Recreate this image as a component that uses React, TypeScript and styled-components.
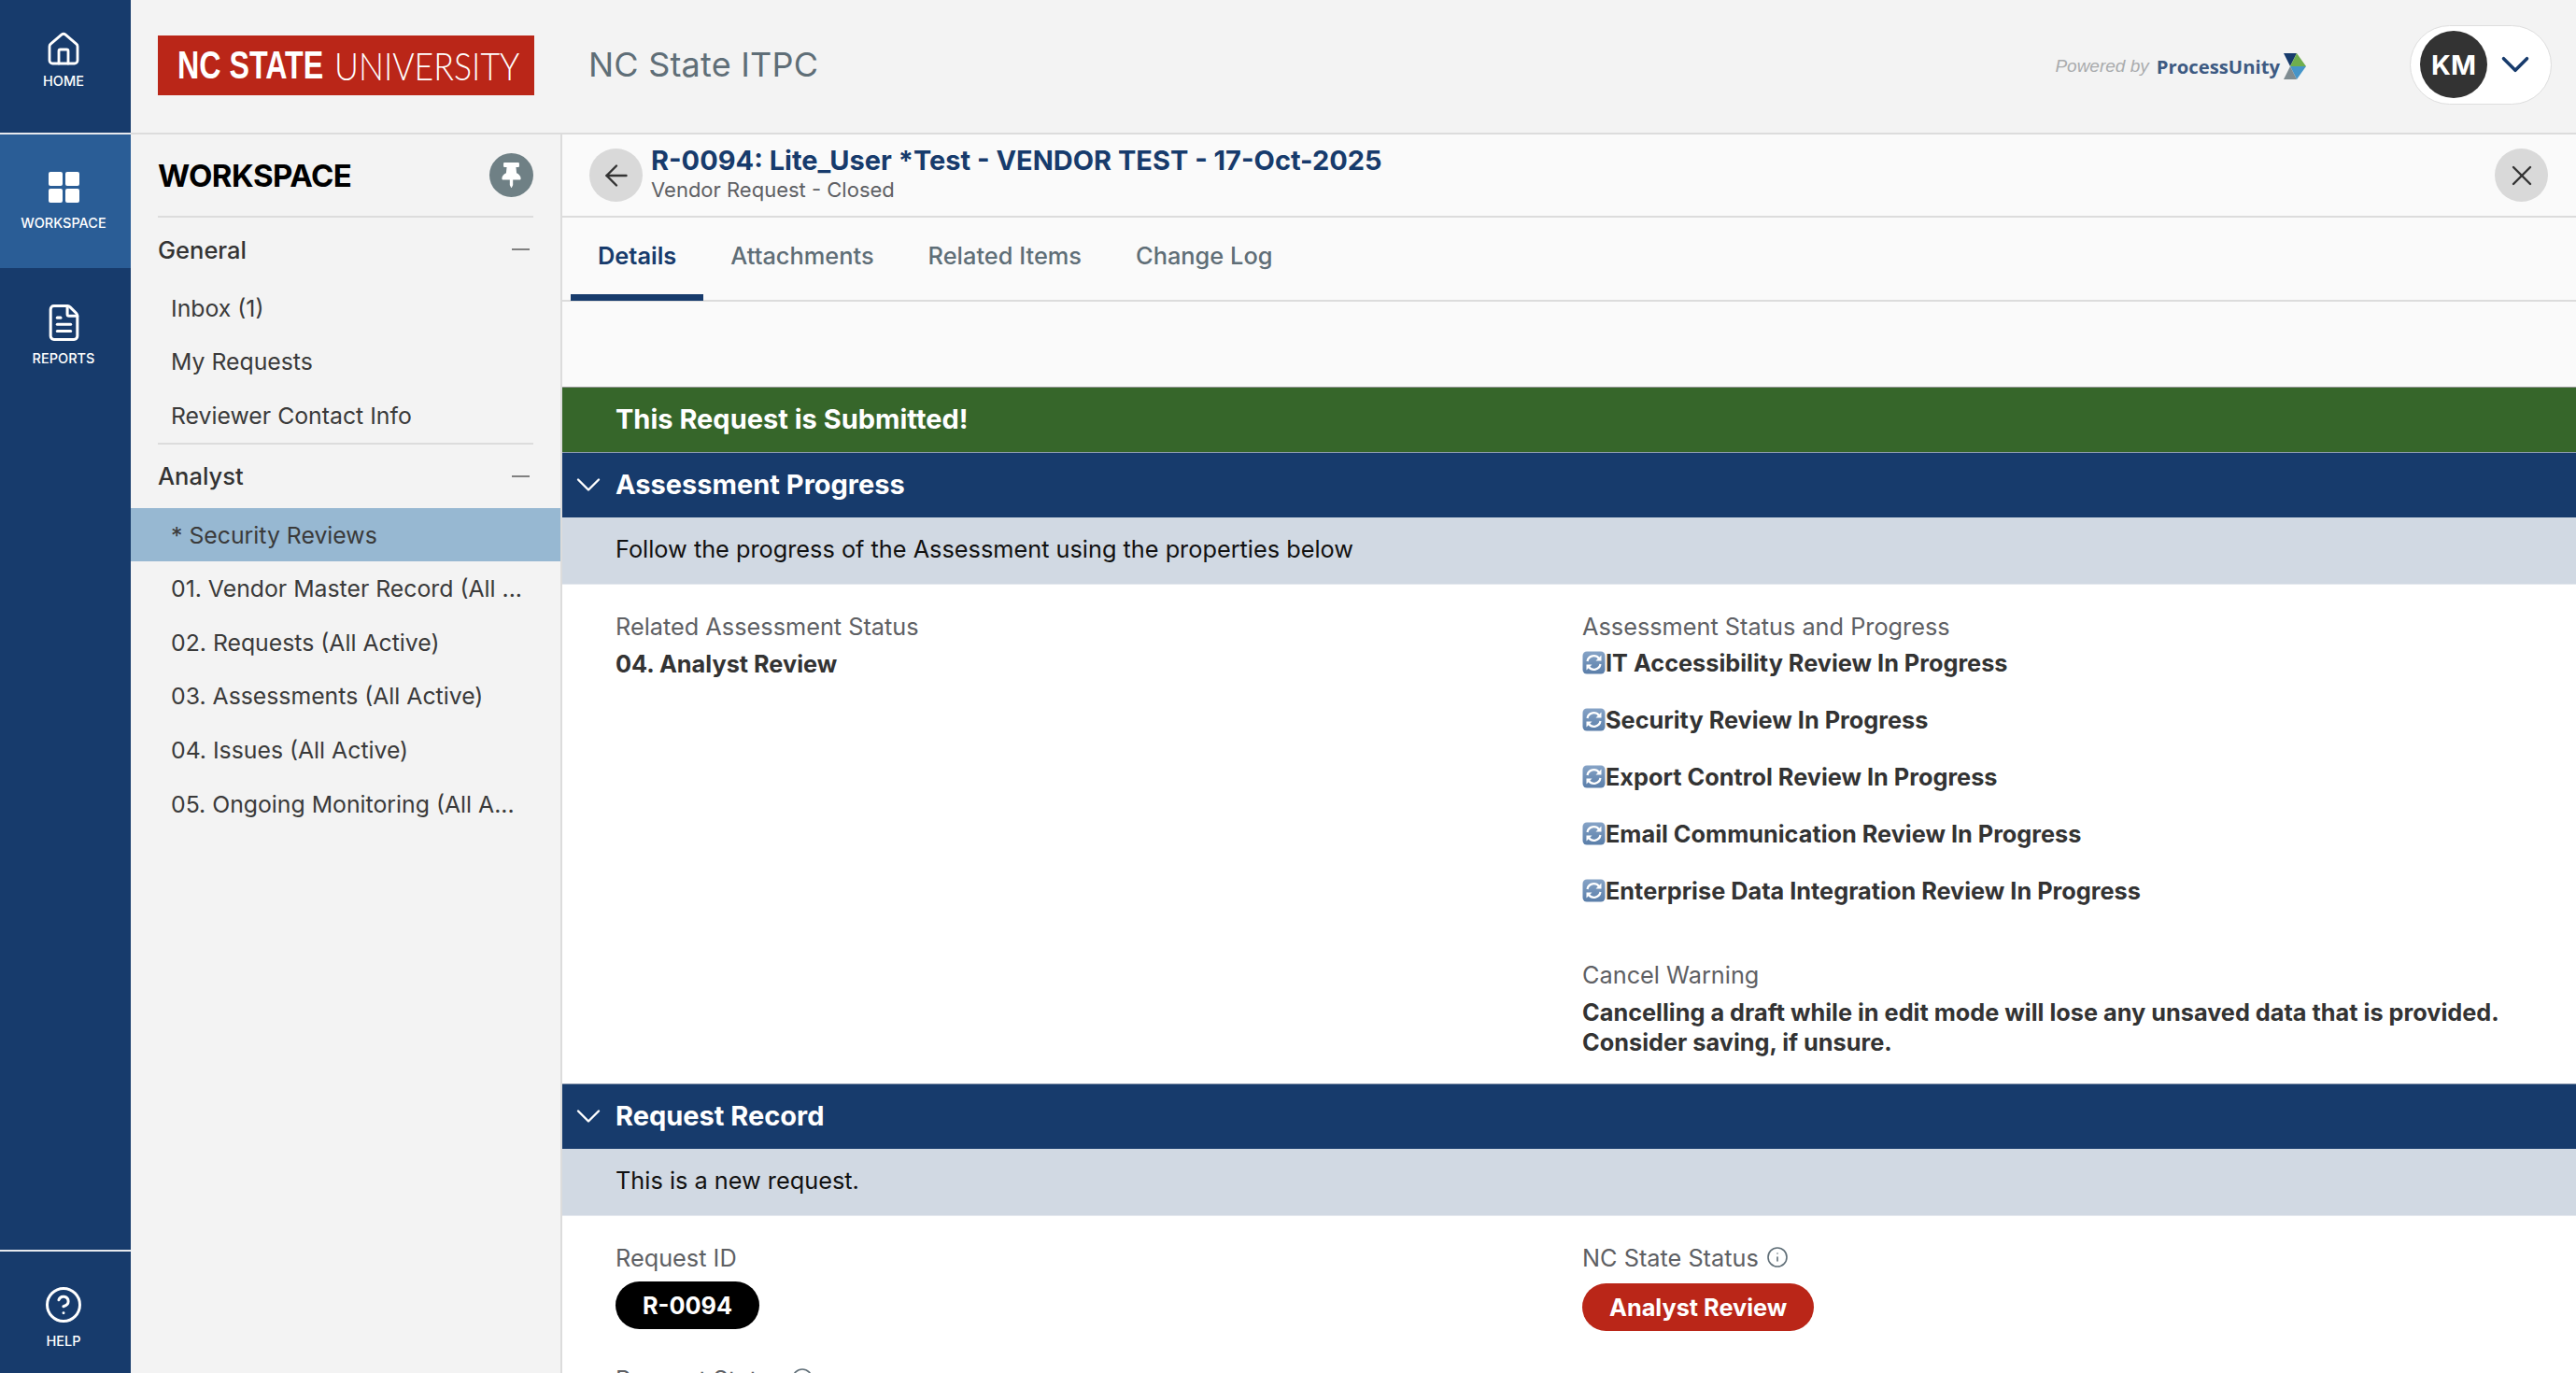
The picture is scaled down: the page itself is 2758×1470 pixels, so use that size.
import React from 'react';
import styled, { createGlobalStyle } from 'styled-components';
import { ArrowLeft, ChevronDown, CircleHelp, FileText, House, Info, X } from 'lucide-react';
import { FaThumbtack } from 'react-icons/fa';

const NAVY = '#173b6c';

const GlobalStyle = createGlobalStyle`
  html, body { margin: 0; padding: 0; height: 100%; }
  body { font-family: Inter, "Noto Sans", "Liberation Sans", sans-serif; background: #fff; color: #333; overflow: hidden; }
  * { box-sizing: border-box; }
`;

const Shell = styled.div`
  display: flex;
  width: 2758px;
  height: 1470px;
  overflow: hidden;
`;

const Rail = styled.nav`
  width: 140px;
  flex: none;
  display: flex;
  flex-direction: column;
  background: ${NAVY};
`;

const RailItem = styled.a<{ $active?: boolean; $height: number; $iconTop: number }>`
  display: flex;
  flex-direction: column;
  align-items: center;
  height: ${(p) => p.$height}px;
  padding: ${(p) => p.$iconTop}px 4px 0 0;
  background: ${(p) => (p.$active ? '#2a5d96' : 'transparent')};
  color: #fff;
  font-size: 14.5px;
  font-weight: 500;
  line-height: 18px;
  svg { display: block; }
`;

const RailIconBox = styled.span<{ $gap?: number }>`
  height: 36px;
  display: flex;
  align-items: center;
  justify-content: center;
  margin-bottom: ${(p) => p.$gap ?? 12}px;
`;

const RailDivider = styled.div`
  height: 2px;
  background: #e6e9ee;
`;

const RailHelp = styled.div`
  margin-top: auto;
`;

const Column = styled.div`
  flex: 1;
  min-width: 0;
  display: flex;
  flex-direction: column;
`;

const TopBar = styled.header`
  height: 144px;
  flex: none;
  display: flex;
  align-items: center;
  padding: 0 26px 4px 29px;
  background: #f3f3f3;
  border-bottom: 2px solid #dcdcdc;
`;

const Logo = styled.div`
  width: 403px;
  height: 64px;
  flex: none;
  display: flex;
  align-items: center;
  gap: 10px;
  padding-left: 21px;
  background: #ba2618;
  color: #fff;
  font-size: 42px;
  white-space: nowrap;
  margin-top: 2px;
`;

const LogoBold = styled.b`
  width: 158px;
  font-family: "Liberation Sans", sans-serif;
  font-weight: 700;
  transform: scaleX(0.767);
  transform-origin: left center;
`;

const LogoLight = styled.span`
  width: 195px;
  font-family: Lato, "Liberation Sans", sans-serif;
  font-weight: 300;
  transform: scaleX(0.85);
  transform-origin: left center;
`;

const AppName = styled.div`
  margin-left: 58px;
  font-size: 36px;
  color: #5f6e77;
  letter-spacing: 0.2px;
`;

const Powered = styled.div`
  margin-left: auto;
  display: flex;
  align-items: center;
  margin-right: 111px;
  margin-top: 4px;
`;

const PoweredBy = styled.span`
  font-family: "Liberation Sans", sans-serif;
  font-style: italic;
  font-size: 19px;
  color: #a9abad;
  margin-right: 8px;
`;

const PoweredName = styled.span`
  font-family: "Open Sans", sans-serif;
  font-size: 20.3px;
  font-weight: 700;
  color: #3d5a82;
  margin-right: 4px;
`;

const UserPill = styled.div`
  width: 152px;
  height: 85px;
  display: flex;
  align-items: center;
  padding-left: 10px;
  border-radius: 43px;
  border: 1px solid #dedede;
  background: #fff;
  color: ${NAVY};
`;

const Avatar = styled.div`
  width: 72px;
  height: 72px;
  flex: none;
  border-radius: 50%;
  background: #333;
  color: #fff;
  font-size: 29px;
  font-weight: 700;
  display: flex;
  align-items: center;
  justify-content: center;
  margin-right: 5px;
`;

const Body = styled.div`
  flex: 1;
  min-height: 0;
  display: flex;
`;

const Sidebar = styled.aside`
  width: 462px;
  flex: none;
  background: #f3f3f3;
  border-right: 2px solid #dcdcdc;
`;

const SidebarHead = styled.div`
  height: 89px;
  margin: 0 29px;
  display: flex;
  align-items: center;
  justify-content: space-between;
  border-bottom: 2px solid #dcdcdc;
  font-size: 33px;
  font-weight: 700;
  color: #000;
  letter-spacing: -0.5px;
`;

const PinButton = styled.span`
  width: 47px;
  height: 47px;
  border-radius: 50%;
  background: #6f8085;
  color: #fff;
  display: flex;
  align-items: center;
  justify-content: center;
`;

const GroupHead = styled.div<{ $height: number }>`
  height: ${(p) => p.$height}px;
  margin: 0 29px;
  display: flex;
  align-items: center;
  justify-content: space-between;
  font-size: 25.5px;
  font-weight: 500;
  color: #333;
`;

const Minus = styled.span`
  width: 19px;
  height: 2px;
  background: #808080;
  margin-right: 4px;
`;

const SideRow = styled.div<{ $active?: boolean }>`
  height: 57.6px;
  display: flex;
  align-items: center;
  padding-left: 43px;
  font-size: 24.8px;
  color: #3a3a3a;
  white-space: nowrap;
  background: ${(p) => (p.$active ? '#97b8d2' : 'transparent')};
`;

const SideDivider = styled.div`
  height: 2px;
  margin: 0 29px;
  background: #dcdcdc;
`;

const Main = styled.main`
  flex: 1;
  min-width: 0;
  overflow: hidden;
  background: #fff;
`;

const TitleBar = styled.div`
  height: 89px;
  display: flex;
  align-items: center;
  padding: 0 30px 0 29px;
  background: #fafafa;
  border-bottom: 2px solid #dcdcdc;
`;

const RoundButton = styled.span`
  width: 57px;
  height: 57px;
  flex: none;
  border-radius: 50%;
  background: #d9d9d9;
  color: #333;
  display: flex;
  align-items: center;
  justify-content: center;
`;

const TitleText = styled.div`
  flex: 1;
  margin-left: 9px;
  padding-bottom: 6px;
`;

const Title = styled.div`
  font-size: 29px;
  line-height: 36px;
  font-weight: 700;
  color: ${NAVY};
`;

const Subtitle = styled.div`
  font-size: 22px;
  line-height: 26px;
  color: #5e6064;
`;

const Tabs = styled.div`
  height: 90px;
  display: flex;
  padding-left: 9px;
  background: #fafafa;
  border-bottom: 2px solid #dcdcdc;
`;

const Tab = styled.div<{ $active?: boolean }>`
  height: 89px;
  padding: 0 29px 2px;
  display: flex;
  align-items: center;
  font-size: 25.4px;
  font-weight: ${(p) => (p.$active ? 600 : 500)};
  color: ${(p) => (p.$active ? NAVY : '#5f6e77')};
  border-bottom: 7px solid ${(p) => (p.$active ? NAVY : 'transparent')};
`;

const Spacer = styled.div`
  height: 91px;
  background: #fafafa;
`;

const Banner = styled.div`
  height: 70px;
  display: flex;
  align-items: center;
  padding: 0 0 2px 57px;
  background: #36662a;
  border-top: 1px solid #9a9a9a;
  color: #fff;
  font-size: 29px;
  font-weight: 700;
`;

const SectionHead = styled.div`
  height: 70px;
  display: flex;
  align-items: center;
  padding: 0 0 2px 6px;
  background: ${NAVY};
  border-top: 1px solid #8d9bb0;
  color: #fff;
  font-size: 29px;
  font-weight: 700;
  svg { margin-right: 7px; }
`;

const SectionNote = styled.div`
  height: 72px;
  display: flex;
  align-items: center;
  padding: 0 0 5px 57px;
  background: #d1d9e3;
  border-bottom: 1px solid #e4e8ee;
  font-size: 25.3px;
  color: #111;
`;

const FieldGrid = styled.div<{ $height: number }>`
  display: grid;
  grid-template-columns: 1035px 1fr;
  align-items: start;
  min-height: ${(p) => p.$height}px;
  padding: 26px 20px 0 57px;
`;

const Field = styled.div`
  display: flex;
  flex-direction: column;
`;

const Label = styled.div`
  display: flex;
  align-items: center;
  gap: 8px;
  height: 36px;
  font-size: 25.3px;
  color: #5e6064;
  svg { color: #5f6e77; }
`;

const Value = styled.div`
  margin-top: 7px;
  font-size: 25.3px;
  line-height: 31.5px;
  font-weight: 700;
  color: #333;
`;

const ProgressList = styled.div`
  display: flex;
  flex-direction: column;
  gap: 30px;
  margin-top: 6px;
  margin-bottom: 56px;
`;

const ProgressRow = styled.div`
  display: flex;
  align-items: center;
  height: 31px;
  font-size: 25.3px;
  font-weight: 700;
  color: #333;
`;

const Pill = styled.span<{ $bg: string; $top: number }>`
  align-self: flex-start;
  height: 51px;
  display: inline-flex;
  align-items: center;
  padding: 0 29px;
  margin-top: ${(p) => p.$top}px;
  border-radius: 26px;
  background: ${(p) => p.$bg};
  color: #fff;
  font-size: 25.3px;
  font-weight: 700;
`;

const SyncIcon = () => (
  <svg width="25" height="25" viewBox="0 0 25 25" style={{ flex: 'none' }}>
    <defs>
      <linearGradient id="sync" x1="0" y1="0" x2="0" y2="1">
        <stop offset="0" stopColor="#86a3c6" />
        <stop offset="1" stopColor="#5a7ea9" />
      </linearGradient>
    </defs>
    <rect x="0.5" y="0.5" width="24" height="24" rx="4.5" fill="url(#sync)" />
    <path d="M5.5 11a7 7 0 0 1 12.5-3" fill="none" stroke="#fff" strokeWidth="2.2" />
    <path d="M19.5 14a7 7 0 0 1-12.5 3" fill="none" stroke="#fff" strokeWidth="2.2" />
    <path d="M20.5 4.5v6h-6z" fill="#fff" />
    <path d="M4.5 20.5v-6h6z" fill="#fff" />
  </svg>
);

const WorkspaceIcon = () => (
  <svg width="33" height="33" viewBox="0 0 33 33" fill="#fff">
    <rect width="15" height="15" rx="2" />
    <rect x="18" width="15" height="15" rx="2" />
    <rect y="18" width="15" height="15" rx="2" />
    <rect x="18" y="18" width="15" height="15" rx="2" />
  </svg>
);

const ProcessUnityMark = () => (
  <svg width="24" height="28" viewBox="0 0 24 28">
    <path d="M0 0h14l-7 14z" fill="#173b6c" />
    <path d="M14 0l10 14H7z" fill="#6fae4e" />
    <path d="M7 14h17L14 28z" fill="#4595c9" />
    <path d="M7 14l7 14H0z" fill="#7f8c91" />
  </svg>
);

const generalItems = ['Inbox (1)', 'My Requests', 'Reviewer Contact Info'];

const analystItems = [
  '* Security Reviews',
  '01. Vendor Master Record (All ...',
  '02. Requests (All Active)',
  '03. Assessments (All Active)',
  '04. Issues (All Active)',
  '05. Ongoing Monitoring (All A...',
];

const reviews = [
  'IT Accessibility Review In Progress',
  'Security Review In Progress',
  'Export Control Review In Progress',
  'Email Communication Review In Progress',
  'Enterprise Data Integration Review In Progress',
];

export default function App() {
  return (
    <Shell>
      <GlobalStyle />
      <Rail>
        <RailItem $height={142} $iconTop={35}>
          <RailIconBox $gap={7}><House size={40} strokeWidth={1.7} /></RailIconBox>
          HOME
        </RailItem>
        <RailDivider />
        <RailItem $active $height={143} $iconTop={38}>
          <RailIconBox><WorkspaceIcon /></RailIconBox>
          WORKSPACE
        </RailItem>
        <RailItem $height={143} $iconTop={40}>
          <RailIconBox><FileText size={43} strokeWidth={1.7} /></RailIconBox>
          REPORTS
        </RailItem>
        <RailHelp>
          <RailDivider />
          <RailItem $height={130} $iconTop={39}>
            <RailIconBox><CircleHelp size={42} strokeWidth={1.7} /></RailIconBox>
            HELP
          </RailItem>
        </RailHelp>
      </Rail>
      <Column>
        <TopBar>
          <Logo>
            <LogoBold>NC STATE</LogoBold>
            <LogoLight>UNIVERSITY</LogoLight>
          </Logo>
          <AppName>NC State ITPC</AppName>
          <Powered>
            <PoweredBy>Powered by</PoweredBy>
            <PoweredName>ProcessUnity</PoweredName>
            <ProcessUnityMark />
          </Powered>
          <UserPill>
            <Avatar>KM</Avatar>
            <ChevronDown size={50} strokeWidth={1.7} />
          </UserPill>
        </TopBar>
        <Body>
          <Sidebar>
            <SidebarHead>
              WORKSPACE
              <PinButton><FaThumbtack size={27} /></PinButton>
            </SidebarHead>
            <GroupHead $height={68}>General<Minus /></GroupHead>
            {generalItems.map((item) => (
              <SideRow key={item}>{item}</SideRow>
            ))}
            <SideDivider />
            <GroupHead $height={68}>Analyst<Minus /></GroupHead>
            {analystItems.map((item, i) => (
              <SideRow key={item} $active={i === 0}>{item}</SideRow>
            ))}
          </Sidebar>
          <Main>
            <TitleBar>
              <RoundButton><ArrowLeft size={36} strokeWidth={1.6} /></RoundButton>
              <TitleText>
                <Title>R-0094: Lite_User *Test - VENDOR TEST - 17-Oct-2025</Title>
                <Subtitle>Vendor Request - Closed</Subtitle>
              </TitleText>
              <RoundButton><X size={36} strokeWidth={1.6} /></RoundButton>
            </TitleBar>
            <Tabs>
              <Tab $active>Details</Tab>
              <Tab>Attachments</Tab>
              <Tab>Related Items</Tab>
              <Tab>Change Log</Tab>
            </Tabs>
            <Spacer />
            <Banner>This Request is Submitted!</Banner>
            <SectionHead><ChevronDown size={44} strokeWidth={1.3} />Assessment Progress</SectionHead>
            <SectionNote>Follow the progress of the Assessment using the properties below</SectionNote>
            <FieldGrid $height={534}>
              <Field>
                <Label>Related Assessment Status</Label>
                <Value>04. Analyst Review</Value>
              </Field>
              <Field>
                <Label>Assessment Status and Progress</Label>
                <ProgressList>
                  {reviews.map((review) => (
                    <ProgressRow key={review}><SyncIcon />{review}</ProgressRow>
                  ))}
                </ProgressList>
                <Label>Cancel Warning</Label>
                <Value>
                  Cancelling a draft while in edit mode will lose any unsaved data that is provided.
                  <br />
                  Consider saving, if unsure.
                </Value>
              </Field>
            </FieldGrid>
            <SectionHead><ChevronDown size={44} strokeWidth={1.3} />Request Record</SectionHead>
            <SectionNote>This is a new request.</SectionNote>
            <FieldGrid $height={130}>
              <Field>
                <Label>Request ID</Label>
                <Pill $bg="#000" $top={8}>R-0094</Pill>
              </Field>
              <Field>
                <Label>NC State Status<Info size={24} strokeWidth={1.6} /></Label>
                <Pill $bg="#ba2618" $top={10}>Analyst Review</Pill>
              </Field>
            </FieldGrid>
            <FieldGrid $height={60}>
              <Field>
                <Label>Request Status<Info size={24} strokeWidth={1.6} /></Label>
              </Field>
            </FieldGrid>
          </Main>
        </Body>
      </Column>
    </Shell>
  );
}
